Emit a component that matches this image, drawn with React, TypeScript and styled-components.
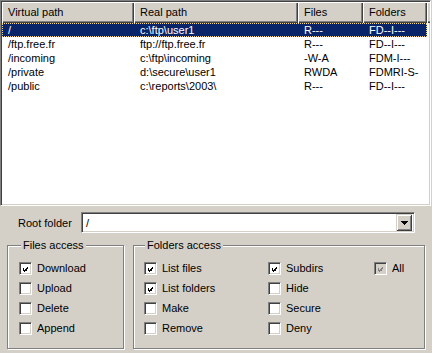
import React from 'react'
import styled, { createGlobalStyle } from 'styled-components'

const GlobalStyle = createGlobalStyle`
  html, body {
    margin: 0;
    padding: 0;
    background: #d4d0c8;
  }
  body {
    font-family: "Liberation Sans", Arial, sans-serif;
    font-size: 11px;
    color: #000;
  }
`

interface Mapping {
  virtual: string
  real: string
  files: string
  folders: string
}

const mappings: Mapping[] = [
  { virtual: '/', real: 'c:\\ftp\\user1', files: 'R---', folders: 'FD--I---' },
  { virtual: '/ftp.free.fr', real: 'ftp://ftp.free.fr', files: 'R---', folders: 'FD--I---' },
  { virtual: '/incoming', real: 'c:\\ftp\\incoming', files: '-W-A', folders: 'FDM-I---' },
  { virtual: '/private', real: 'd:\\secure\\user1', files: 'RWDA', folders: 'FDMRI-S-' },
  { virtual: '/public', real: 'c:\\reports\\2003\\', files: 'R---', folders: 'FD--I---' },
]

const columns = [
  { title: 'Virtual path', width: 132 },
  { title: 'Real path', width: 164 },
  { title: 'Files', width: 65 },
  { title: 'Folders', width: 64 },
]

const Window = styled.div`
  width: 432px;
  height: 353px;
  background: #d4d0c8;
  display: flex;
  flex-direction: column;
  overflow: hidden;
`

const ListView = styled.div`
  box-sizing: border-box;
  width: 431px;
  height: 206px;
  background: #fff;
  border: 1px solid;
  border-color: #808080 #fff #fff #808080;
  box-shadow: inset 1px 1px 0 #404040, inset -1px -1px 0 #d4d0c8;
  padding: 1px;
  overflow: hidden;
`

const HeaderRow = styled.div`
  display: flex;
  height: 21px;
`

const HeaderCell = styled.div<{ $w?: number }>`
  box-sizing: border-box;
  flex: ${p => (p.$w ? `0 0 ${p.$w}px` : '1 1 auto')};
  height: 21px;
  line-height: 20px;
  padding-left: 6px;
  background: #d4d0c8;
  box-shadow: inset 1px 1px 0 #fff, inset -1px -1px 0 #404040, inset -2px -2px 0 #808080;
  white-space: nowrap;
  overflow: hidden;
`

const Row = styled.div<{ $selected?: boolean }>`
  display: flex;
  width: 425px;
  height: 14px;
  line-height: 14px;
  background: ${p => (p.$selected ? '#0a246a' : 'transparent')};
  color: ${p => (p.$selected ? '#fff' : '#000')};
  outline: ${p => (p.$selected ? '1px dotted #f2d98f' : 'none')};
  outline-offset: -1px;
`

const Cell = styled.div<{ $w: number }>`
  flex: 0 0 ${p => p.$w}px;
  padding-left: 6px;
  box-sizing: border-box;
  white-space: nowrap;
  overflow: hidden;
`

const RootRow = styled.div`
  display: flex;
  align-items: center;
  height: 21px;
  margin-top: 6px;
  padding-left: 18px;
`

const RootLabel = styled.span`
  width: 63px;
`

const Combo = styled.div`
  box-sizing: border-box;
  width: 334px;
  height: 21px;
  display: flex;
  align-items: center;
  background: #fff;
  border: 1px solid;
  border-color: #808080 #fff #fff #808080;
  box-shadow: inset 1px 1px 0 #404040, inset -1px -1px 0 #d4d0c8;
  padding: 2px 2px 2px 4px;
`

const ComboText = styled.span`
  flex: 1;
`

const DropButton = styled.div`
  box-sizing: border-box;
  width: 16px;
  height: 17px;
  background: #d4d0c8;
  box-shadow: inset 1px 1px 0 #d4d0c8, inset -1px -1px 0 #404040, inset 2px 2px 0 #fff,
    inset -2px -2px 0 #808080;
  display: flex;
  align-items: center;
  justify-content: center;
`

const Groups = styled.div`
  display: flex;
  gap: 9px;
  margin-top: 12px;
  padding-left: 7px;
`

const GroupBox = styled.div<{ $w: number; $pad: number }>`
  position: relative;
  box-sizing: border-box;
  width: ${p => p.$w}px;
  height: 104px;
  border: 1px solid #808080;
  box-shadow: inset 1px 1px 0 #fff, 1px 1px 0 #fff;
  padding: 16px 0 0 ${p => p.$pad}px;
  display: flex;
`

const Legend = styled.span<{ $left: number }>`
  position: absolute;
  top: -7px;
  left: ${p => p.$left}px;
  padding: 0 2px;
  line-height: 13px;
  background: #d4d0c8;
`

const Column = styled.div<{ $w?: number }>`
  display: flex;
  flex-direction: column;
  gap: 7px;
  width: ${p => (p.$w ? `${p.$w}px` : 'auto')};
`

const CheckRow = styled.label`
  display: flex;
  align-items: center;
  gap: 5px;
  height: 13px;
  line-height: 13px;
  white-space: nowrap;
`

const Box = styled.span<{ $disabled?: boolean }>`
  box-sizing: border-box;
  width: 13px;
  height: 13px;
  flex: 0 0 13px;
  background: ${p => (p.$disabled ? '#d4d0c8' : '#fff')};
  border: 1px solid;
  border-color: #808080 #fff #fff #808080;
  box-shadow: inset 1px 1px 0 #404040, inset -1px -1px 0 #d4d0c8;
  padding: 2px;
  display: flex;
`

const checkPixels = [
  [6, 0],
  [5, 1], [6, 1],
  [0, 2], [4, 2], [5, 2], [6, 2],
  [0, 3], [1, 3], [3, 3], [4, 3], [5, 3],
  [0, 4], [1, 4], [2, 4], [3, 4], [4, 4],
  [1, 5], [2, 5], [3, 5],
  [2, 6],
]

function CheckMark({ color }: { color: string }) {
  return (
    <svg width="9" height="9" viewBox="0 0 9 9" shapeRendering="crispEdges">
      {checkPixels.map(([x, y]) => (
        <rect key={`${x}-${y}`} x={x + 1} y={y + 1} width="1" height="1" fill={color} />
      ))}
    </svg>
  )
}

function Check({ label, checked, disabled }: { label: string; checked?: boolean; disabled?: boolean }) {
  return (
    <CheckRow>
      <Box $disabled={disabled}>{checked && <CheckMark color={disabled ? '#808080' : '#000'} />}</Box>
      <span>{label}</span>
    </CheckRow>
  )
}

export default function App() {
  return (
    <Window>
      <GlobalStyle />
      <ListView>
        <HeaderRow>
          {columns.map(c => (
            <HeaderCell key={c.title} $w={c.width}>
              {c.title}
            </HeaderCell>
          ))}
          <HeaderCell />
        </HeaderRow>
        {mappings.map((m, i) => (
          <Row key={m.virtual} $selected={i === 0}>
            <Cell $w={columns[0].width}>{m.virtual}</Cell>
            <Cell $w={columns[1].width}>{m.real}</Cell>
            <Cell $w={columns[2].width}>{m.files}</Cell>
            <Cell $w={columns[3].width}>{m.folders}</Cell>
          </Row>
        ))}
      </ListView>

      <RootRow>
        <RootLabel>Root folder</RootLabel>
        <Combo>
          <ComboText>/</ComboText>
          <DropButton>
            <svg width="7" height="4" viewBox="0 0 7 4" shapeRendering="crispEdges">
              <path d="M0 0h7v1H0zM1 1h5v1H1zM2 2h3v1H2zM3 3h1v1H3z" fill="#000" />
            </svg>
          </DropButton>
        </Combo>
      </RootRow>

      <Groups>
        <GroupBox $w={117} $pad={11}>
          <Legend $left={13}>Files access</Legend>
          <Column>
            <Check label="Download" checked />
            <Check label="Upload" />
            <Check label="Delete" />
            <Check label="Append" />
          </Column>
        </GroupBox>
        <GroupBox $w={292} $pad={10}>
          <Legend $left={11}>Folders access</Legend>
          <Column $w={124}>
            <Check label="List files" checked />
            <Check label="List folders" checked />
            <Check label="Make" />
            <Check label="Remove" />
          </Column>
          <Column $w={106}>
            <Check label="Subdirs" checked />
            <Check label="Hide" />
            <Check label="Secure" />
            <Check label="Deny" />
          </Column>
          <Column>
            <Check label="All" checked disabled />
          </Column>
        </GroupBox>
      </Groups>
    </Window>
  )
}
